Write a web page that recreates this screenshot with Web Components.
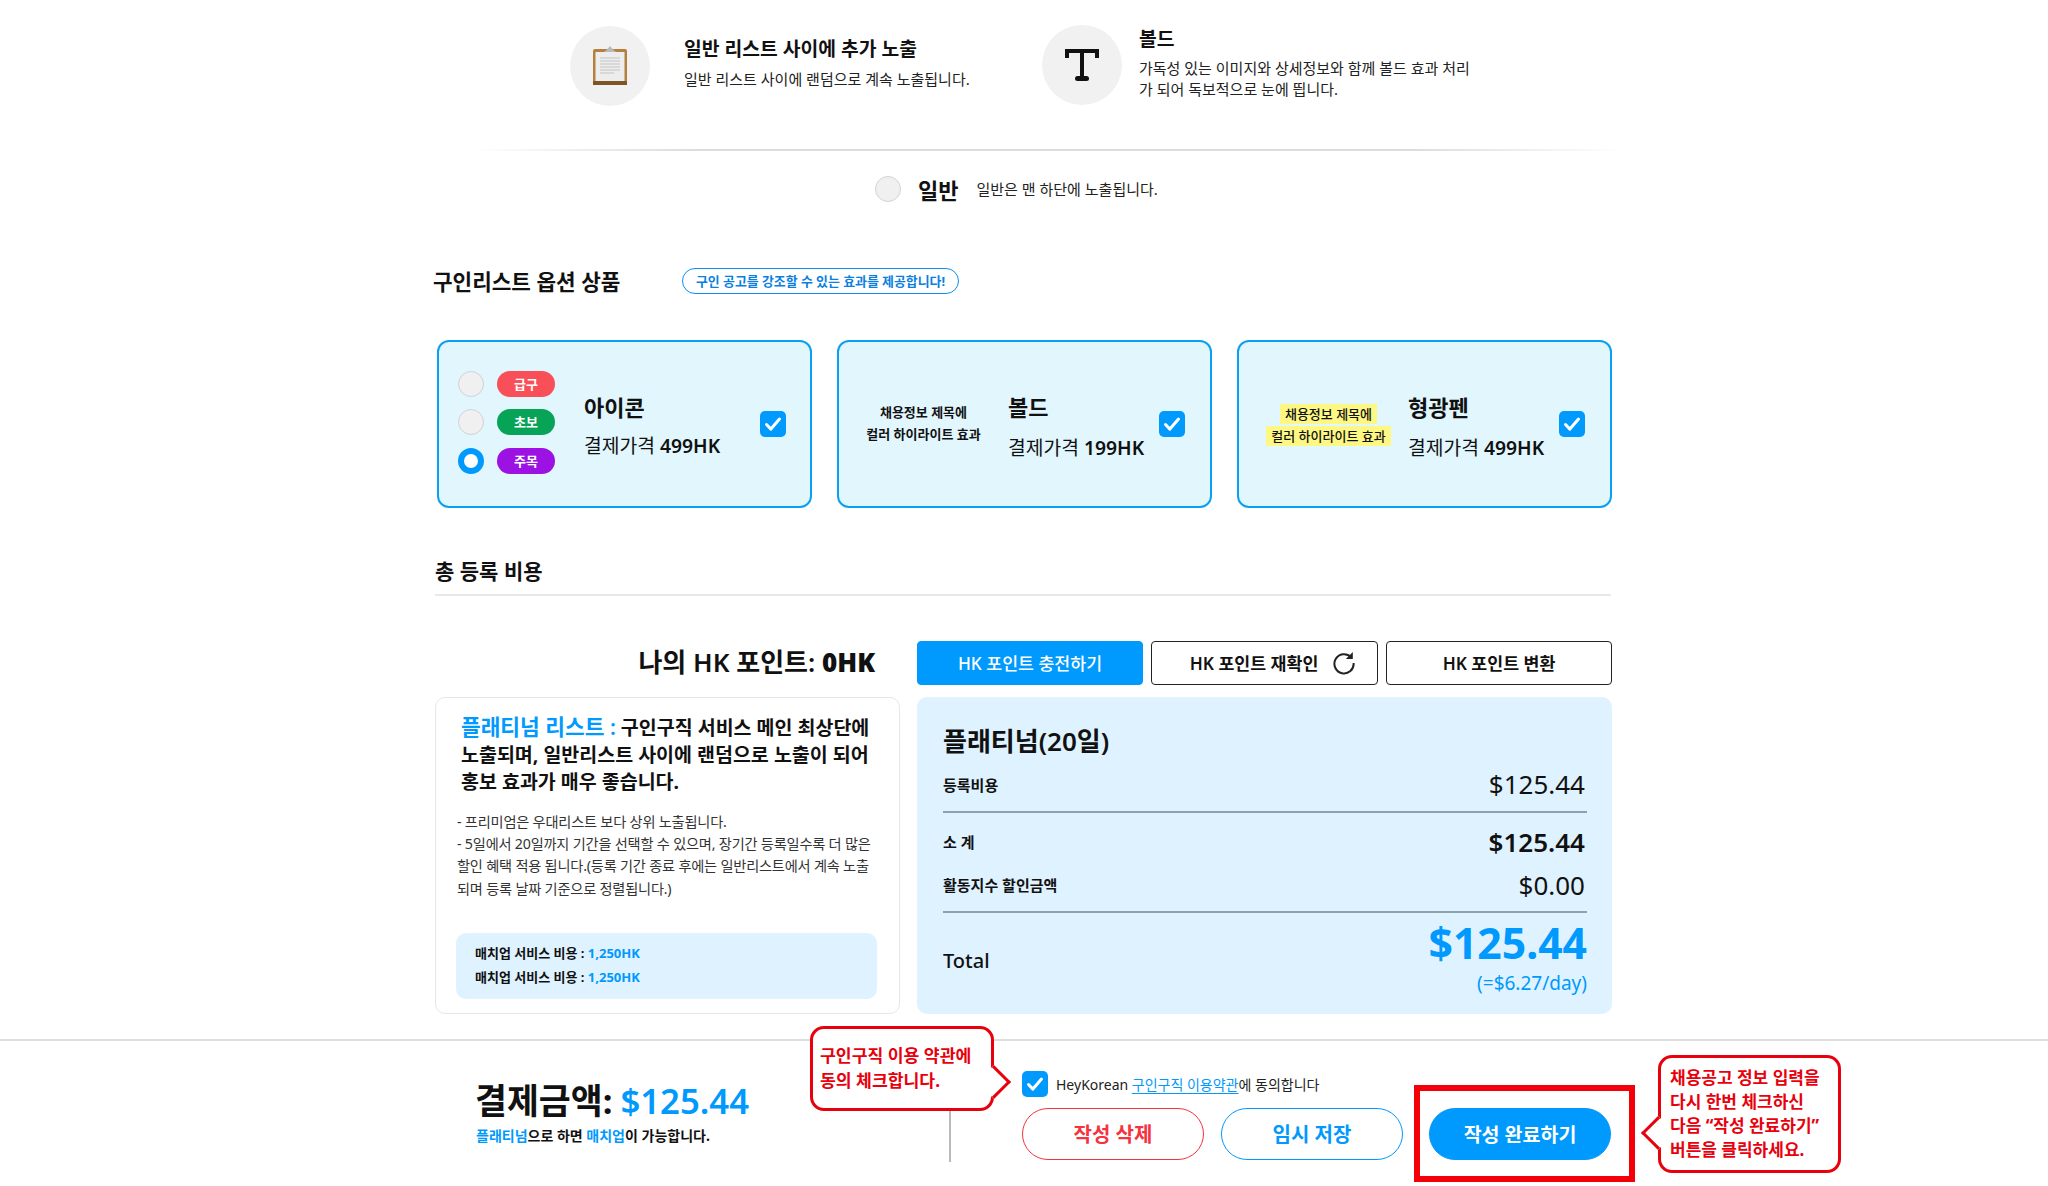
<!DOCTYPE html>
<html lang="ko">
<head>
<meta charset="utf-8">
<title>구인리스트 옵션</title>
<style>
    html, body { margin: 0; height: 1186px; overflow: hidden; background: #fff; }
    body { font-family: "Noto Sans", "Noto Sans CJK KR", sans-serif; color: #111; }
</style>
</head>
<body>

<hk-main>
    <hk-features>
        <hk-feature icon="clipboard" gap="34" top="1">
            <span slot="title">일반 리스트 사이에 추가 노출</span>
            일반 리스트 사이에 랜덤으로 계속 노출됩니다.
        </hk-feature>
        <hk-feature icon="bold" gap="17">
            <span slot="title">볼드</span>
            가독성 있는 이미지와 상세정보와 함께 볼드 효과 처리<br>가 되어 독보적으로 눈에 띕니다.
        </hk-feature>
    </hk-features>

    <hk-plain-option></hk-plain-option>

    <hk-section-head pill="구인 공고를 강조할 수 있는 효과를 제공합니다!">구인리스트 옵션 상품</hk-section-head>

    <hk-options>
        <hk-option-card name="아이콘" price="499HK" visual="145" lift>
            <hk-badge-list></hk-badge-list>
        </hk-option-card>
        <hk-option-card name="볼드" price="199HK" visual="169" style="padding-right:25px">
            <hk-sample></hk-sample>
        </hk-option-card>
        <hk-option-card name="형광펜" price="499HK" visual="169" style="padding-right:25px">
            <hk-sample marker></hk-sample>
        </hk-option-card>
    </hk-options>

    <hk-total-head>총 등록 비용</hk-total-head>

    <hk-points></hk-points>

    <hk-panels>
        <hk-info-panel></hk-info-panel>
        <hk-cost-panel></hk-cost-panel>
    </hk-panels>
</hk-main>

<hk-footer></hk-footer>

<script>
const BLUE = '#0099fd';

const checkBox = size => `
    <svg width="${size}" height="${size}" viewBox="0 0 26 26" style="display:block;flex:none">
        <rect width="26" height="26" rx="5" fill="${BLUE}"/>
        <path d="M6.5 13.5l4.4 4.6 8.6-10" fill="none" stroke="#fff" stroke-width="3" stroke-linecap="round" stroke-linejoin="round"/>
    </svg>`;

// plain element with a shadow root from a style + markup string
class HkBase extends HTMLElement {
    connectedCallback() {
        if (this.shadowRoot) return;
        this.attachShadow({ mode: 'open' }).innerHTML = `<style>${this.css || ''}</style>${this.html}`;
    }
}

class HkMain extends HkBase {
    css = `:host { display: block; width: 1178px; margin: 0 auto; height: 1039px; }`;
    html = `<slot></slot>`;
}

class HkFeatures extends HkBase {
    css = `:host { display: grid; grid-template-columns: 471px 1fr; padding: 24px 0 0 135px; box-sizing: border-box; width: 1190px; height: 151px;
                   border-bottom: 2px solid transparent; border-image: linear-gradient(90deg, #fff 3%, #dcdcdc 22%, #dcdcdc 82%, #fff) 1; }`;
    html = `<slot></slot>`;
}

class HkFeature extends HkBase {
    get css() {
        const first = this.hasAttribute('top');
        return `
            :host { display: flex; align-items: flex-start; gap: ${this.getAttribute('gap')}px; }
            .circle { width: 80px; height: 80px; border-radius: 50%; background: #f1f1f1; display: flex; align-items: center; justify-content: center; flex: none; margin: ${first ? 2 : 1}px 0 0 ${first ? 0 : 1}px; }
            .title { font-size: 19.3px; font-weight: 700; line-height: 26px; margin: ${first ? '12px 0 7px' : '2px 0 6px'}; }
            .text { font-size: 15px; line-height: 21px; color: #222; }
        `;
    }
    get html() {
        const icons = {
            clipboard: `<svg width="36" height="40" viewBox="0 0 36 40">
                <rect x="1" y="3" width="34" height="36" rx="2" fill="#b5803e"/>
                <rect x="1" y="35" width="34" height="4" fill="#7d5527"/>
                <rect x="3.5" y="6" width="29" height="29" fill="#ededed"/>
                <path d="M8 12h20M8 15h20M8 18h20M8 21h20M8 24h20M8 27h14" stroke="#d8d8d8" stroke-width="2"/>
                <path d="M12 6l3-2.5 3-3.5 3 3.5 3 2.5z" fill="#b9b9b9"/>
            </svg>`,
            bold: `<svg width="36" height="36" viewBox="0 0 36 36">
                <path d="M3 11V4h30v7M18 4v27" fill="none" stroke="#111" stroke-width="4"/>
                <rect x="11" y="29" width="14" height="5" rx="2.5" fill="#111"/>
            </svg>`
        };
        return `
            <div class="circle">${icons[this.getAttribute('icon')]}</div>
            <div>
                <div class="title"><slot name="title"></slot></div>
                <div class="text"><slot></slot></div>
            </div>`;
    }
}

class HkRadio extends HkBase {
    get css() {
        const on = this.hasAttribute('on');
        return `:host { display: block; flex: none; width: 26px; height: 26px; box-sizing: border-box; border-radius: 50%;
            background: ${on ? '#fff' : '#f0f0f0'}; border: ${on ? `6px solid ${BLUE}` : '1.5px solid #cfd3d6'}; }`;
    }
    html = ``;
}

class HkPlainOption extends HkBase {
    css = `
        :host { display: flex; align-items: center; height: 78px; padding: 0 0 3px 440px; box-sizing: border-box; }
        b { font-size: 22px; margin: 0 18px 0 17px; }
        span { font-size: 15px; color: #222; }
    `;
    html = `<hk-radio></hk-radio><b>일반</b><span>일반은 맨 하단에 노출됩니다.</span>`;
}

class HkSectionHead extends HkBase {
    css = `
        :host { display: flex; align-items: center; height: 46px; margin: 29px 0 0 -2px; }
        .t { font-size: 21.3px; font-weight: 700; width: 249px; flex: none; padding-bottom: 2px; }
        .pill { font-size: 12.9px; font-weight: 700; color: #0a7fe0; border: 1.5px solid #0a8ff0; border-radius: 14px; height: 26px; line-height: 25px; box-sizing: border-box; width: 277px; text-align: center; }
    `;
    get html() {
        return `<div class="t"><slot></slot></div><div class="pill">${this.getAttribute('pill')}</div>`;
    }
}

class HkOptions extends HkBase {
    css = `:host { display: grid; grid-template-columns: repeat(3, 375px); column-gap: 25px; margin: 36px 0 0 2px; }`;
    html = `<slot></slot>`;
}

class HkOptionCard extends HkBase {
    get css() {
        const lift = this.hasAttribute('lift');
        return `
            :host { display: flex; align-items: center; height: 168px; box-sizing: border-box; background: #e2f6fe; border: 2px solid #0d9ff0; border-radius: 12px; padding: 0 24px 0 0; }
            .visual { flex: none; width: ${this.getAttribute('visual')}px; display: flex; justify-content: center; }
            .info { flex: 1; margin-top: 6px; }
            .name { font-size: 22px; font-weight: 700; line-height: 30px; margin-bottom: 11px; }
            .price { font-size: 19.3px; line-height: 30px; margin: ${lift ? '-2px 0 2px' : 0}; }
            .price b { font-weight: 600; }
        `;
    }
    get html() {
        return `
            <div class="visual"><slot></slot></div>
            <div class="info">
                <div class="name">${this.getAttribute('name')}</div>
                <div class="price">결제가격 <b>${this.getAttribute('price')}</b></div>
            </div>
            ${checkBox(26)}`;
    }
}

class HkBadgeList extends HkBase {
    css = `
        :host { display: grid; grid-template-columns: 26px 58px; gap: 12.5px 13px; align-items: center; margin: -4px 10px 0 0; }
        i { display: block; font-style: normal; height: 26px; border-radius: 13px; color: #fff; font-size: 13px; font-weight: 700; text-align: center; line-height: 26px; }
    `;
    html = `
        <hk-radio></hk-radio><i style="background:#f94f58">급구</i>
        <hk-radio></hk-radio><i style="background:#07a457">초보</i>
        <hk-radio on></hk-radio><i style="background:#9c12e3">주목</i>`;
}

class HkSample extends HkBase {
    get css() {
        const marker = this.hasAttribute('marker');
        return `
            :host { display: block; text-align: center; font-size: 13px; font-weight: ${marker ? 500 : 700}; line-height: 22px; margin: ${marker ? '1px 0 0 10px' : '-3px 0 0 0'}; }
            span { padding: 1px 5px; background: ${marker ? '#fdf884' : 'transparent'}; white-space: nowrap; }
        `;
    }
    html = `<span>채용정보 제목에</span><br><span>컬러 하이라이트 효과</span>`;
}

class HkTotalHead extends HkBase {
    css = `:host { display: block; height: 39px; margin-top: 47px; border-bottom: 2px solid #e8e8e8; font-size: 21px; font-weight: 700; line-height: 33px; width: 1176px; }`;
    html = `<slot></slot>`;
}

class HkPoints extends HkBase {
    css = `
        :host { display: flex; align-items: center; margin-top: 45px; height: 44px; }
        .label { width: 440px; flex: none; text-align: right; font-size: 26px; font-weight: 600; margin: -5px 42px 0 0; }
        .label b { font-weight: 900; }
        .btns { display: grid; grid-template-columns: 226px 227px 226px; gap: 8px; flex: none; }
        button { all: unset; box-sizing: border-box; height: 44px; padding-bottom: 2px; border-radius: 4px; border: 1.5px solid #222; background: #fff; font: inherit; font-size: 17.3px; font-weight: 600; display: flex; align-items: center; justify-content: center; gap: 13px; }
        button.refresh { padding-left: 17px; }
        button svg { margin: 2px 0 0 1px; }
        .p { background: ${BLUE}; border-color: ${BLUE}; color: #fff; font-weight: 500; }
    `;
    html = `
        <div class="label">나의 HK 포인트: <b>0HK</b></div>
        <div class="btns">
            <button class="p">HK 포인트 충전하기</button>
            <button class="refresh">HK 포인트 재확인
                <svg width="24" height="24" viewBox="0 0 24 24"><path d="M19 6.2A9.6 9.6 0 1 0 21.6 12" fill="none" stroke="#222" stroke-width="2"/><path d="M20.8 1v7h-7z" fill="#222"/></svg>
            </button>
            <button>HK 포인트 변환</button>
        </div>`;
}

class HkPanels extends HkBase {
    css = `:host { display: grid; grid-template-columns: 465px 695px; column-gap: 17px; margin-top: 12px; height: 317px; }`;
    html = `<slot></slot>`;
}

class HkInfoPanel extends HkBase {
    css = `
        :host { display: flex; flex-direction: column; box-sizing: border-box; border: 1.5px solid #e7e7e7; border-radius: 10px; padding: 15px 22px 14px 20px; }
        h3 { margin: 0 0 15px 5px; font-size: 19.5px; line-height: 27.2px; font-weight: 700; white-space: nowrap; }
        h3 em { font-style: normal; color: ${BLUE}; font-weight: 600; font-size: 21.4px; }
        p { margin: 0 0 0 1px; font-size: 14.2px; line-height: 22.4px; color: #333; letter-spacing: -.2px; white-space: nowrap; }
        .fee { margin-top: auto; background: #dff2ff; border-radius: 10px; padding: 9px 19px; font-size: 13px; font-weight: 700; line-height: 23.5px; height: 66px; box-sizing: border-box; }
        .fee em { font-style: normal; color: ${BLUE}; }
    `;
    html = `
        <h3><em>플래티넘 리스트 :</em> 구인구직 서비스 메인 최상단에<br>노출되며, 일반리스트 사이에 랜덤으로 노출이 되어<br>홍보 효과가 매우 좋습니다.</h3>
        <p>- 프리미엄은 우대리스트 보다 상위 노출됩니다.<br>- 5일에서 20일까지 기간을 선택할 수 있으며, 장기간 등록일수록 더 많은<br>할인 혜택 적용 됩니다.(등록 기간 종료 후에는 일반리스트에서 계속 노출<br>되며 등록 날짜 기준으로 정렬됩니다.)</p>
        <div class="fee">매치업 서비스 비용 : <em>1,250HK</em><br>매치업 서비스 비용 : <em>1,250HK</em></div>`;
}

class HkCostPanel extends HkBase {
    css = `
        :host { display: block; box-sizing: border-box; background: #dff2ff; border-radius: 10px; padding: 25px 25px 0 26px; }
        h3 { margin: 0 0 2px; font-size: 26px; line-height: 38px; font-weight: 600; }
        .row { display: flex; justify-content: space-between; align-items: center; font-size: 15px; font-weight: 700; }
        .row span:last-child { font-size: 26px; font-weight: 400; margin-right: 2px; }
        .a { height: 44px; }
        .line { height: 1.5px; background: #8ea2ad; }
        .sum { height: 43px; }
        .sum .strong { font-weight: 600 !important; }
        .total { display: flex; justify-content: space-between; }
        .total .l { font-size: 20px; font-weight: 500; align-self: center; margin-top: 13px; }
        .total .r { text-align: right; color: ${BLUE}; }
        .big { font-size: 42.7px; font-weight: 700; line-height: 54px; margin-top: 3px; }
        .day { font-size: 19px; line-height: 26px; }
    `;
    html = `
        <h3>플래티넘(20일)</h3>
        <div class="row a"><span>등록비용</span><span>$125.44</span></div>
        <div class="line" style="margin-top:5px"></div>
        <div class="row sum" style="margin-top:7.5px"><span>소 계</span><span class="strong">$125.44</span></div>
        <div class="row sum"><span>활동지수 할인금액</span><span>$0.00</span></div>
        <div class="line" style="margin-top:5px"></div>
        <div class="total">
            <div class="l">Total</div>
            <div class="r"><div class="big">$125.44</div><div class="day">(=$6.27/day)</div></div>
        </div>`;
}

class HkCallout extends HkBase {
    get css() {
        const left = this.getAttribute('tail') === 'left';
        return `
            :host { position: absolute; box-sizing: border-box; display: block; background: #fff; border: 3px solid #e8000c; border-radius: 14px; color: #e8000c; font-weight: 700; white-space: nowrap; }
            .tail { position: absolute; width: 24px; height: 24px; background: #fff; box-sizing: border-box; transform: rotate(45deg);
                    ${left ? 'left: -15px; border-left: 3px solid #e8000c; border-bottom: 3px solid #e8000c;'
                           : 'right: -15px; border-right: 3px solid #e8000c; border-top: 3px solid #e8000c;'}
                    top: ${this.getAttribute('tail-top')}px; }
        `;
    }
    html = `<slot></slot><div class="tail"></div>`;
}

class HkPillButton extends HkBase {
    get css() {
        const c = this.getAttribute('color');
        const fill = this.hasAttribute('fill');
        return `:host { display: flex; align-items: center; justify-content: center; width: 182px; height: 52px; box-sizing: border-box; border-radius: 26px;
            border: 1.5px solid ${c}; background: ${fill ? c : '#fff'}; color: ${fill ? '#fff' : c}; font-size: ${fill ? 19.5 : 20}px; font-weight: ${fill ? 600 : 700}; padding-bottom: 2px; }`;
    }
    html = `<slot></slot>`;
}

class HkFooter extends HkBase {
    css = `
        :host { display: block; position: relative; height: 147px; border-top: 2px solid #dedede; box-sizing: border-box; }
        .bar { display: flex; height: 100%; }
        .price { flex: none; width: 474px; padding: 34px 0 0 475px; }
        .amount { font-size: 34.7px; font-weight: 700; line-height: 52px; }
        .amount em, .note em { font-style: normal; color: ${BLUE}; }
        .amount em { font-weight: 600; margin-left: -1px; }
        .note { font-size: 14px; font-weight: 700; line-height: 20px; margin: -1px 0 0 1px; }
        .sep { flex: none; width: 2px; height: 52px; margin: 69px 0 0 0; background: #b9b9b9; }
        .actions { margin-left: 71px; padding-top: 30px; }
        .agree { display: flex; align-items: center; gap: 8px; font-size: 14px; height: 26px; color: #222; }
        .agree a { color: ${BLUE}; text-decoration: underline; text-underline-offset: 3px; }
        .btns { display: flex; gap: 17px; margin-top: 11px; }
        .done { position: relative; margin-left: 9px; }
        .frame { position: absolute; left: -15px; top: -23px; width: 221px; height: 97px; box-sizing: border-box; border: 6px solid #f40009; }
        .c1 { left: 810px; top: -15px; width: 184px; height: 85px; padding: 14px 0 0 7px; line-height: 25px; font-size: 17.2px; z-index: 2; }
        .c2 { left: 1658px; top: 14px; width: 183px; height: 118px; padding: 8px 0 0 9px; line-height: 24px; font-size: 17px; }
    `;
    html = `
        <div class="bar">
            <div class="price">
                <div class="amount">결제금액: <em>$125.44</em></div>
                <div class="note"><em>플래티넘</em>으로 하면 <em>매치업</em>이 가능합니다.</div>
            </div>
            <div class="sep"></div>
            <div class="actions">
                <div class="agree">${checkBox(26)}<span>HeyKorean <a>구인구직 이용약관</a>에 동의합니다</span></div>
                <div class="btns">
                    <hk-pill-button color="#f4333f">작성 삭제</hk-pill-button>
                    <hk-pill-button color="${BLUE}">임시 저장</hk-pill-button>
                    <div class="done">
                        <hk-pill-button color="${BLUE}" fill>작성 완료하기</hk-pill-button>
                        <div class="frame"></div>
                    </div>
                </div>
            </div>
        </div>
        <hk-callout class="c1" tail="right" tail-top="41">구인구직 이용 약관에<br>동의 체크합니다.</hk-callout>
        <hk-callout class="c2" tail="left" tail-top="63">채용공고 정보 입력을<br>다시 한번 체크하신<br>다음 “작성 완료하기”<br>버튼을 클릭하세요.</hk-callout>`;
}

customElements.define('hk-main', HkMain);
customElements.define('hk-features', HkFeatures);
customElements.define('hk-feature', HkFeature);
customElements.define('hk-radio', HkRadio);
customElements.define('hk-plain-option', HkPlainOption);
customElements.define('hk-section-head', HkSectionHead);
customElements.define('hk-options', HkOptions);
customElements.define('hk-option-card', HkOptionCard);
customElements.define('hk-badge-list', HkBadgeList);
customElements.define('hk-sample', HkSample);
customElements.define('hk-total-head', HkTotalHead);
customElements.define('hk-points', HkPoints);
customElements.define('hk-panels', HkPanels);
customElements.define('hk-info-panel', HkInfoPanel);
customElements.define('hk-cost-panel', HkCostPanel);
customElements.define('hk-callout', HkCallout);
customElements.define('hk-pill-button', HkPillButton);
customElements.define('hk-footer', HkFooter);
</script>
</body>
</html>
